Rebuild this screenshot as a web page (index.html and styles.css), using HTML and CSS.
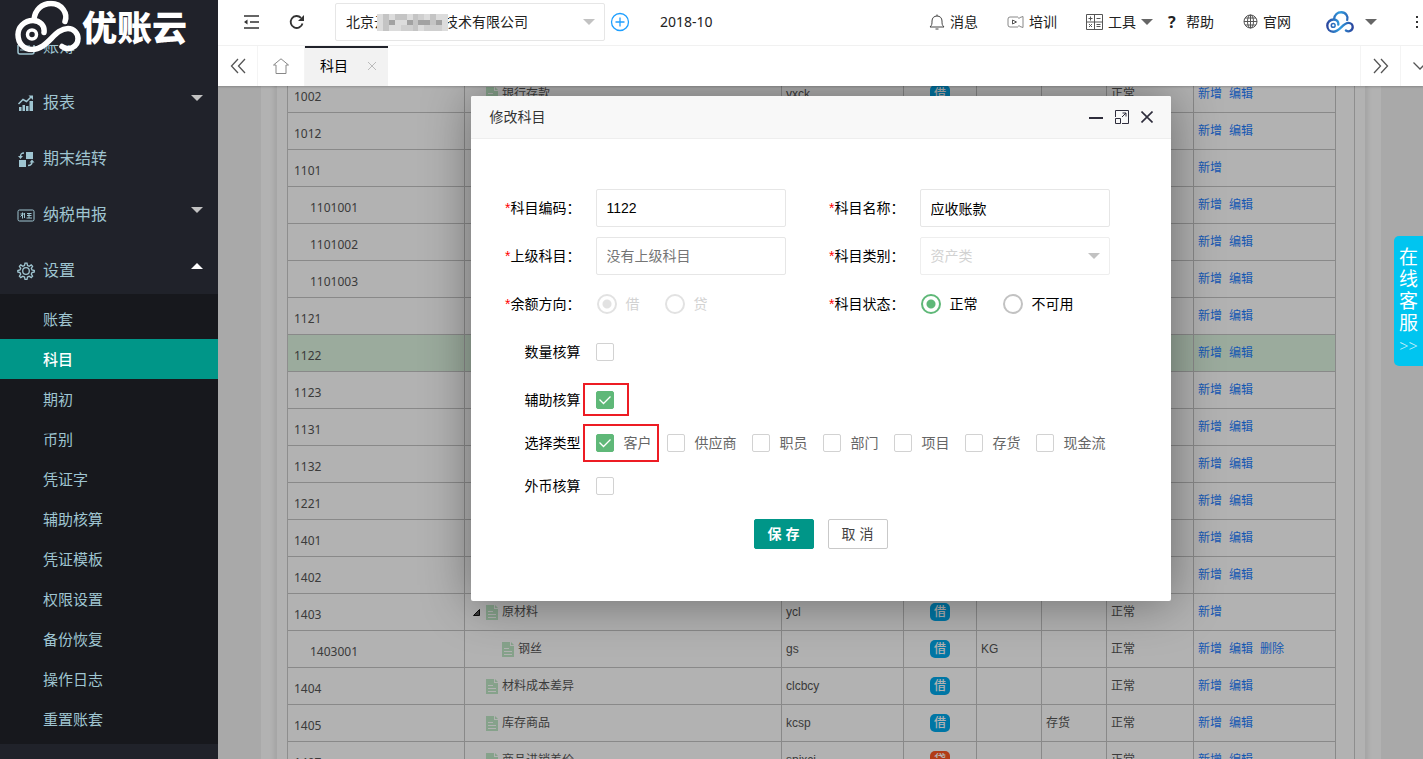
FILE: index.html
```html
<!DOCTYPE html>
<html lang="zh-CN">
<head>
<meta charset="utf-8">
<title>优账云 - 科目</title>
<link rel="stylesheet" href="styles.css">
</head>
<body>
<svg class="defs" aria-hidden="true">
  <symbol id="doc" viewBox="0 0 12 15"><path d="M0 0h8v4h4v11H0z" fill="#c1e9c7"/><path d="M9 0l3 3H9z" fill="#c1e9c7"/><path d="M2 6.500h5M2 9.500h8M2 12.500h8" stroke="#fff"/></symbol>
  <symbol id="cloud" viewBox="0 0 66 52"><g fill="none" stroke-width="5.500" stroke-linecap="round"><path d="M19 19C20 9 27 3 36 3c11 0 17 10 14 18"/><path d="M29 32c1-7-4-12-11-12C9 20 3 27 3 34c0 9 6 15 14 15 16 0 22-21 36-21 6 0 10 5 10 10 0 8-9 13-16 8"/><circle cx="17" cy="34" r="4.500" stroke-width="3.500"/></g></symbol>
  <symbol id="tick" viewBox="0 0 18 18"><path d="M3.500 8.500l4 4 7-7" fill="none" stroke="#fff" stroke-width="1.300"/></symbol>
</svg>
<aside class="sidebar">
  <div class="brand"><svg class="brand-mark" viewBox="0 0 66 52"><use href="#cloud"/></svg><span class="brand-name">优账云</span></div>
  <nav class="menu">
    <a class="menu-item" href="#"><svg class="menu-icon" viewBox="0 0 18 18"><rect x="1" y="3" width="16" height="13" rx="2" fill="none" stroke="currentColor" stroke-width="1.500"/><path d="M3 12h12M5 8h8" stroke="currentColor"/></svg><span class="menu-text">账簿</span></a>
    <a class="menu-item" href="#"><svg class="menu-icon" viewBox="0 0 18 18"><path d="M2 17v-4h2.500v4zM5.500 17v-6H8v6zM9 17v-5h2.500v5zM12.500 17V7H16v10z" fill="currentColor"/><path d="M1.500 10L6 5.500l3.500 2L14 3" fill="none" stroke="currentColor" stroke-width="1.500"/><path d="M11.500 1.500H16V6z" fill="currentColor"/></svg><span class="menu-text">报表</span><i class="caret"></i></a>
    <a class="menu-item" href="#"><svg class="menu-icon" viewBox="0 0 18 18"><path d="M9 2h7v7H9zM2 10h7v7H2z" fill="currentColor"/><path d="M7 3C4 3 3.500 4 3.500 7M11 15.500c3 0 4-1 4-4" fill="none" stroke="currentColor" stroke-width="1.500"/><path d="M1 6h5L3.500 9zM12.500 12.500h5L15 9.500z" fill="currentColor"/></svg><span class="menu-text">期末结转</span></a>
    <a class="menu-item" href="#"><svg class="menu-icon" viewBox="0 0 18 18"><rect x="1" y="4" width="16" height="11" rx="1.500" fill="none" stroke="currentColor"/><path d="M3.500 8h4M5.500 6.500v6M3.500 10.500l2-2M7.500 7v5M10 7.500h4.500M10 9.500h4.500M9.500 12H15M12 7v5" stroke="currentColor"/></svg><span class="menu-text">纳税申报</span><i class="caret"></i></a>
    <a class="menu-item" href="#"><svg class="menu-icon" viewBox="0 0 18 18"><g fill="none" stroke="currentColor" stroke-width="1.300"><circle cx="9" cy="9" r="3.300"/><path d="M7.500 3.500L8 1.200h2l.5 2.300 1.700.7 2-1.300 1.400 1.400-1.300 2 .7 1.700 2.300.5v1.500l-2.300.5-.7 1.700 1.300 2-1.400 1.400-2-1.300-1.700.7-.5 2.300H8l-.5-2.300-1.700-.7-2 1.300-1.400-1.400 1.300-2-.7-1.700L.8 10V8.500L3 8l.7-1.700-1.300-2 1.400-1.400 2 1.300z"/></g></svg><span class="menu-text">设置</span><i class="caret caret-up"></i></a>
    <div class="submenu">
      <a href="#">账套</a><a class="current" href="#">科目</a><a href="#">期初</a><a href="#">币别</a><a href="#">凭证字</a><a href="#">辅助核算</a><a href="#">凭证模板</a><a href="#">权限设置</a><a href="#">备份恢复</a><a href="#">操作日志</a><a href="#">重置账套</a>
    </div>
  </nav>
</aside>
<div class="main">
  <header class="topbar">
    <button class="icon-btn" aria-label="菜单"><svg width="16" height="16" viewBox="0 0 16 16"><path d="M1 2h15M7 8h9M1 14h15" stroke="#333" stroke-width="1.500"/><path d="M1 8l3.500-2.500v5z" fill="#333"/></svg></button>
    <button class="icon-btn" aria-label="刷新"><svg width="16" height="16" viewBox="0 0 16 16"><path d="M13.500 9.500A6 6 0 1 1 12 3.800" fill="none" stroke="#333" stroke-width="1.800"/><path d="M15 1v6H9z" fill="#333"/></svg></button>
    <div class="company">
      <select class="select" aria-label="公司"><option>北京云　　　　技术有限公司</option></select>
      <svg class="mosaic" viewBox="0 0 12 3" preserveAspectRatio="none" shape-rendering="crispEdges"><path fill="#dcdcdc" d="M0 0h12v3H0z"/><path fill="#c4c4c4" d="M1 0h1v3H1zM3 0h2v1H3zM6 0h1v3H6zM9 0h1v2H9z"/><path fill="#a2a2a2" d="M5 1h1v1H5zM7 1h2v1H7zM10 1h1v1h-1zM2 1h1v1H2z"/><path fill="#cfcfcf" d="M4 2h2v1H4zM8 2h3v1H8zM7 0h1v1H7z"/></svg>
      <i class="caret caret-light"></i>
    </div>
    <button class="plus" aria-label="新增"><svg width="20" height="20" viewBox="0 0 20 20"><g fill="none" stroke="#1e9fff" stroke-width="1.300"><circle cx="10" cy="10" r="8.500"/><path d="M10 5.500v9M5.500 10h9"/></g></svg></button>
    <span class="period">2018-10</span>
    <nav class="tools">
      <a href="#"><svg width="16" height="16" viewBox="0 0 16 16"><path d="M1 13h14c-2-2-2-3-2-6 0-3-2-5-5-5S3 4 3 7c0 3 0 4-2 6zM6.500 15h3M8 .5V2" fill="none" stroke="#444"/></svg>消息</a>
      <a class="gap-md" href="#"><svg width="17" height="16" viewBox="0 0 17 16"><path d="M11 13H3a2 2 0 0 1-2-2V5a2 2 0 0 1 2-2h8M13 3.500l3-1v11l-3-1M12 3v2M12 11v2" fill="none" stroke="#888"/><path d="M5.500 6v4l4-2z" fill="none" stroke="#555"/></svg>培训</a>
      <a class="gap-md" href="#"><svg width="17" height="16" viewBox="0 0 17 16"><path d="M.5.500h16v15H.5zM8.500 1v14M1 8h15M2.500 4.500h4M4.500 2.500v4M10.500 4.500h4M3 10l3 3M6 10l-3 3M10.500 10.500h4M10.500 12.500h4" fill="none" stroke="#555"/></svg>工具<i class="caret caret-dark"></i></a>
      <a class="gap-sm" href="#"><b class="question">?</b>帮助</a>
      <a class="gap-md" href="#"><svg width="15" height="15" viewBox="0 0 15 15"><g fill="none" stroke="#555"><circle cx="7.500" cy="7.500" r="6.500"/><ellipse cx="7.500" cy="7.500" rx="3" ry="6.500"/><path d="M7.500 1v13M1 7.500h13M2 4h11M2 11h11"/></g></svg>官网</a>
      <a class="account" href="#" aria-label="账号"><svg class="account-mark" viewBox="0 0 66 52"><defs><linearGradient id="blue" gradientUnits="userSpaceOnUse" x1="0" y1="0" x2="66" y2="0"><stop offset="0" stop-color="#2a3f98"/><stop offset=".5" stop-color="#2f9de0"/><stop offset="1" stop-color="#2a3f98"/></linearGradient></defs><use href="#cloud"/></svg><i class="caret caret-dark"></i></a>
      <button class="more" aria-label="更多"><svg width="4" height="14" viewBox="0 0 4 14"><path d="M1 1h2v2H1zM1 6h2v2H1zM1 11h2v2H1z" fill="#333"/></svg></button>
    </nav>
  </header>
  <div class="tabs">
    <button class="tab-ctl" aria-label="左移"><svg width="16" height="16" viewBox="0 0 16 16"><path d="M8 1L1.500 8 8 15M15 1L8.500 8l6.500 7" fill="none" stroke="#555" stroke-width="1.300"/></svg></button>
    <button class="tab-home" aria-label="主页"><svg width="16" height="16" viewBox="0 0 16 16"><path d="M.5 7L8 .8 15.500 7H13v8.500H3V7z" fill="none" stroke="#888"/></svg></button>
    <div class="tab">科目<button class="tab-close" aria-label="关闭标签"><svg width="8" height="8" viewBox="0 0 8 8"><path d="M0 0l8 8M8 0L0 8" stroke="#bbb"/></svg></button></div>
    <button class="tab-ctl tab-right" aria-label="右移"><svg width="16" height="16" viewBox="0 0 16 16"><path d="M1 1l6.500 7L1 15M8 1l6.500 7L8 15" fill="none" stroke="#555" stroke-width="1.300"/></svg></button>
    <button class="tab-ctl tab-last" aria-label="标签菜单"><svg width="14" height="8" viewBox="0 0 14 8"><path d="M.5.500L7 7l6.500-6.500" fill="none" stroke="#555" stroke-width="1.300"/></svg></button>
  </div>
  <main class="content">
    <section class="page"><div class="card"><div class="table-box">
      <table class="accounts">
        <colgroup><col class="c-code"><col><col class="c-py"><col class="c-dir"><col class="c-unit"><col class="c-unit"><col class="c-state"><col class="c-op"></colgroup>
        <tbody>
        <tr><td class="code">1002</td><td><span class="name"><svg class="doc"><use href="#doc"/></svg>银行存款</span></td><td>yxck</td><td class="dir"><span class="badge">借</span></td><td></td><td></td><td>正常</td><td><span class="ops"><a href="#">新增</a><a href="#">编辑</a></span></td></tr>
        <tr><td class="code">1012</td><td></td><td></td><td></td><td></td><td></td><td></td><td><span class="ops"><a href="#">新增</a><a href="#">编辑</a></span></td></tr>
        <tr><td class="code">1101</td><td></td><td></td><td></td><td></td><td></td><td></td><td><span class="ops"><a href="#">新增</a></span></td></tr>
        <tr><td class="code child">1101001</td><td></td><td></td><td></td><td></td><td></td><td></td><td><span class="ops"><a href="#">新增</a><a href="#">编辑</a></span></td></tr>
        <tr><td class="code child">1101002</td><td></td><td></td><td></td><td></td><td></td><td></td><td><span class="ops"><a href="#">新增</a><a href="#">编辑</a></span></td></tr>
        <tr><td class="code child">1101003</td><td></td><td></td><td></td><td></td><td></td><td></td><td><span class="ops"><a href="#">新增</a><a href="#">编辑</a></span></td></tr>
        <tr><td class="code">1121</td><td></td><td></td><td></td><td></td><td></td><td></td><td><span class="ops"><a href="#">新增</a><a href="#">编辑</a></span></td></tr>
        <tr class="selected"><td class="code">1122</td><td></td><td></td><td></td><td></td><td></td><td></td><td><span class="ops"><a href="#">新增</a><a href="#">编辑</a></span></td></tr>
        <tr><td class="code">1123</td><td></td><td></td><td></td><td></td><td></td><td></td><td><span class="ops"><a href="#">新增</a><a href="#">编辑</a></span></td></tr>
        <tr><td class="code">1131</td><td></td><td></td><td></td><td></td><td></td><td></td><td><span class="ops"><a href="#">新增</a><a href="#">编辑</a></span></td></tr>
        <tr><td class="code">1132</td><td></td><td></td><td></td><td></td><td></td><td></td><td><span class="ops"><a href="#">新增</a><a href="#">编辑</a></span></td></tr>
        <tr><td class="code">1221</td><td></td><td></td><td></td><td></td><td></td><td></td><td><span class="ops"><a href="#">新增</a><a href="#">编辑</a></span></td></tr>
        <tr><td class="code">1401</td><td></td><td></td><td></td><td></td><td></td><td></td><td><span class="ops"><a href="#">新增</a><a href="#">编辑</a></span></td></tr>
        <tr><td class="code">1402</td><td></td><td></td><td></td><td></td><td></td><td></td><td><span class="ops"><a href="#">新增</a><a href="#">编辑</a></span></td></tr>
        <tr><td class="code">1403</td><td><span class="name parent"><svg class="fold" viewBox="0 0 7 7"><path d="M6.500.500v6h-6z" fill="#555" stroke="#111"/></svg><svg class="doc"><use href="#doc"/></svg>原材料</span></td><td>ycl</td><td class="dir"><span class="badge">借</span></td><td></td><td></td><td>正常</td><td><span class="ops"><a href="#">新增</a></span></td></tr>
        <tr><td class="code child">1403001</td><td><span class="name nested"><svg class="doc"><use href="#doc"/></svg>钢丝</span></td><td>gs</td><td class="dir"><span class="badge">借</span></td><td>KG</td><td></td><td>正常</td><td><span class="ops"><a href="#">新增</a><a href="#">编辑</a><a href="#">删除</a></span></td></tr>
        <tr><td class="code">1404</td><td><span class="name"><svg class="doc"><use href="#doc"/></svg>材料成本差异</span></td><td>clcbcy</td><td class="dir"><span class="badge">借</span></td><td></td><td></td><td>正常</td><td><span class="ops"><a href="#">新增</a><a href="#">编辑</a></span></td></tr>
        <tr><td class="code">1405</td><td><span class="name"><svg class="doc"><use href="#doc"/></svg>库存商品</span></td><td>kcsp</td><td class="dir"><span class="badge">借</span></td><td></td><td>存货</td><td>正常</td><td><span class="ops"><a href="#">新增</a><a href="#">编辑</a></span></td></tr>
        <tr><td class="code">1407</td><td><span class="name"><svg class="doc"><use href="#doc"/></svg>商品进销差价</span></td><td>spjxcj</td><td class="dir"><span class="badge badge-credit">贷</span></td><td></td><td></td><td>正常</td><td><span class="ops"><a href="#">新增</a><a href="#">编辑</a></span></td></tr>
        </tbody>
      </table>
    </div></div></section>
    <div class="overlay">
      <div class="dialog" role="dialog" aria-labelledby="dlg-title">
        <div class="dialog-head"><span id="dlg-title">修改科目</span>
          <div class="dialog-ctl">
            <button aria-label="最小化"><svg width="14" height="14" viewBox="0 0 14 14"><path d="M0 8h14" stroke="#2e2d3c" stroke-width="2"/></svg></button>
            <button aria-label="最大化"><svg width="14" height="14" viewBox="0 0 14 14"><path d="M.5 7V.5h13v13H7M.5 8.500h5v5h-5zM7 7l4-4M7.500 3H11v3.500" fill="none" stroke="#2e2d3c"/></svg></button>
            <button aria-label="关闭"><svg width="12" height="12" viewBox="0 0 12 12"><path d="M.5.500l11 11M11.500.500l-11 11" stroke="#2e2d3c" stroke-width="1.600"/></svg></button>
          </div>
        </div>
        <form class="form">
          <div class="row">
            <div class="field"><label class="label" for="code"><i>*</i>科目编码：</label><input class="input" id="code" type="text" value="1122"></div>
            <div class="field"><label class="label" for="name"><i>*</i>科目名称：</label><input class="input" id="name" type="text" value="应收账款"></div>
          </div>
          <div class="row">
            <div class="field"><label class="label" for="parent"><i>*</i>上级科目：</label><input class="input" id="parent" type="text" placeholder="没有上级科目"></div>
            <div class="field"><label class="label" for="kind"><i>*</i>科目类别：</label><div class="select-wrap"><select class="select" id="kind" disabled><option>资产类</option></select><i class="caret caret-light"></i></div></div>
          </div>
          <div class="row">
            <div class="field"><span class="label"><i>*</i>余额方向：</span><div class="radios"><label class="radio off"><input type="radio" name="side" checked disabled>借</label><label class="radio off"><input type="radio" name="side" disabled>贷</label></div></div>
            <div class="field"><span class="label"><i>*</i>科目状态：</span><div class="radios"><label class="radio"><input type="radio" name="state" checked>正常</label><label class="radio"><input type="radio" name="state">不可用</label></div></div>
          </div>
          <div class="row"><div class="field"><label class="label" for="qty">数量核算</label><span class="box"><input type="checkbox" id="qty"><svg><use href="#tick"/></svg></span></div></div>
          <div class="row"><div class="field"><label class="label" for="aux">辅助核算</label><span class="check marked marked-box"><span class="box"><input type="checkbox" id="aux" checked><svg><use href="#tick"/></svg></span></span></div></div>
          <div class="row row-short"><div class="field"><span class="label">选择类型</span><div class="checks">
            <label class="check marked"><span class="box"><input type="checkbox" checked><svg><use href="#tick"/></svg></span>客户</label>
            <label class="check"><span class="box"><input type="checkbox"><svg><use href="#tick"/></svg></span>供应商</label>
            <label class="check"><span class="box"><input type="checkbox"><svg><use href="#tick"/></svg></span>职员</label>
            <label class="check"><span class="box"><input type="checkbox"><svg><use href="#tick"/></svg></span>部门</label>
            <label class="check"><span class="box"><input type="checkbox"><svg><use href="#tick"/></svg></span>项目</label>
            <label class="check"><span class="box"><input type="checkbox"><svg><use href="#tick"/></svg></span>存货</label>
            <label class="check"><span class="box"><input type="checkbox"><svg><use href="#tick"/></svg></span>现金流</label>
          </div></div></div>
          <div class="row"><div class="field"><label class="label" for="fx">外币核算</label><span class="box"><input type="checkbox" id="fx"><svg><use href="#tick"/></svg></span></div></div>
          <div class="actions"><button type="button" class="btn btn-primary">保 存</button><button type="button" class="btn">取 消</button></div>
        </form>
      </div>
    </div>
  </main>
  <a class="service" href="#"><span>在</span><span>线</span><span>客</span><span>服</span><span class="service-more">&gt;&gt;</span></a>
</div>
</body>
</html>
```
FILE: styles.css
```css
* { box-sizing: border-box; }
html, body { height: 100%; }
body {
  margin: 0;
  display: flex;
  overflow: hidden;
  font: 14px/20px "Liberation Sans", "Noto Sans CJK SC", sans-serif;
  color: #333;
  background: #f2f2f2;
}
a { color: inherit; text-decoration: none; }
button { padding: 0; border: 0; background: none; font: inherit; color: inherit; }
svg { flex: none; }
button svg { display: block; }
i { font-style: normal; }
.defs { position: absolute; width: 0; height: 0; }

.caret { width: 0; height: 0; border: 6px solid transparent; border-top-color: #c2c2c2; border-bottom: 0; }
.caret-up { border-bottom: 6px solid #fff; border-top: 0; }
.caret-light { position: absolute; right: 10px; top: 16px; pointer-events: none; }
.caret-dark { border-top-color: #666; }

/* sidebar */
.sidebar { position: relative; flex: none; width: 218px; overflow: hidden; background: #20222a; }
.brand {
  position: absolute; z-index: 2; top: 0; left: 0; right: 0; height: 45px;
  display: flex; gap: 1px; padding-left: 15px;
  background: #20222a; color: #fff;
}
.brand-mark { width: 66px; height: 53px; stroke: #fff; }
.brand-name { font-size: 35px; font-weight: 900; line-height: 58px; }
.menu { padding-top: 14px; color: #9fc5d1; }
.menu-item { display: flex; align-items: center; height: 56px; padding: 0 15px 0 17px; }
.menu-icon { width: 18px; height: 18px; margin: 10px 8px 0 0; }
.menu-text { flex: 1; padding-top: 10px; font-size: 16px; line-height: 48px; }
.submenu { padding: 5px 0; background: #17181d; }
.submenu a { display: block; height: 40px; padding-left: 43px; font-size: 15px; line-height: 42px; }
.submenu .current { background: #009688; color: #fff; font-weight: 500; }

/* top bar */
.main { position: relative; flex: 1; min-width: 0; display: flex; flex-direction: column; }
.topbar { flex: none; display: flex; align-items: center; height: 46px; padding: 0 0 2px 25px; background: #fff; border-bottom: 1px solid #f4f4f4; }
.icon-btn { width: 16px; margin-right: 30px; }
.company { position: relative; width: 270px; margin-right: 5px; }
.select {
  display: block; width: 100%; height: 38px; padding: 0 10px; appearance: none;
  border: 1px solid #e6e6e6; border-radius: 2px; background: #fff; color: #222; font: inherit; opacity: 1;
}
.select:disabled { border-color: #eee; color: #d2d2d2; }
.mosaic { position: absolute; left: 42px; top: 11px; width: 71px; height: 17px; }
.period { margin-left: 30px; font: 14px/20px "Noto Sans", sans-serif; color: #222; }
.tools { flex: 1; display: flex; align-items: center; justify-content: flex-end; color: #222; }
.tools a { display: flex; align-items: center; gap: 5px; }
.gap-md { margin-left: 29px; }
.gap-sm { margin-left: 15px; }
.question { width: 13px; font: 700 16px/20px "Noto Sans", sans-serif; }
.tools .account { margin-left: 35px; gap: 11px; }
.account-mark { width: 28px; height: 22px; stroke: url(#blue); }
.more { margin: 0 4px 0 38px; }

/* tabs */
.tabs { position: relative; z-index: 1; flex: none; display: flex; height: 40px; background: #fff; box-shadow: 0 1px 2px rgba(0, 0, 0, .2); }
.tab-ctl { flex: none; display: flex; align-items: center; justify-content: center; width: 40px; border-right: 1px solid #f4f4f4; }
.tab-home { display: flex; align-items: center; justify-content: center; width: 47px; border-right: 1px solid #f4f4f4; }
.tab { display: flex; align-items: center; gap: 20px; padding: 0 12px 2px 15px; border-top: 2px solid #20222a; background: #f2f2f2; color: #000; }
.tab-right { margin-left: auto; width: 41px; border-left: 1px solid #f4f4f4; }
.tab-last { width: 22px; padding-left: 12px; justify-content: flex-start; overflow: hidden; border: 0; }

/* accounts table */
.content { position: relative; flex: 1; min-height: 0; overflow: hidden; }
.page { margin: -10px 42px 0 43px; padding: 0 15px; background: #fff; }
.card { padding: 0 10px; border: 1px solid #eee; border-width: 0 1px; box-shadow: 0 0 6px rgba(0, 0, 0, .15); }
.table-box { padding-right: 18px; border: 1px solid #ccc; border-width: 0 1px; }
.accounts { width: 100%; table-layout: fixed; border-collapse: separate; border-spacing: 0; font-size: 12px; line-height: 18px; color: #555; }
.accounts td { height: 37px; padding: 0 4px; border: 1px solid #c4c4c4; border-width: 0 1px 1px 0; white-space: nowrap; }
.accounts .code { padding: 5px 6px 0; font-family: "Noto Sans", sans-serif; }
.accounts .child { padding-left: 22px; }
.accounts .dir { text-align: center; }
.c-code { width: 177px; }
.c-py { width: 122px; }
.c-dir { width: 73px; }
.c-unit { width: 65px; }
.c-state { width: 87px; }
.c-op { width: 142px; }
.selected { background: #dff5e1; }
.name { display: flex; align-items: center; gap: 4px; padding-left: 17px; }
.parent { padding-left: 4px; }
.nested { padding-left: 33px; }
.fold { width: 7px; height: 7px; margin-right: 2px; }
.doc { width: 12px; height: 15px; }
.badge { display: inline-block; width: 20px; border-radius: 5px; background: #01aaed; color: #fff; font-weight: 500; }
.badge-credit { background: #ff5722; }
.ops { display: flex; gap: 7px; color: #1e80ff; }

/* dialog */
.overlay { position: absolute; inset: 0; display: flex; justify-content: center; align-items: flex-start; padding-top: 10px; background: rgba(0, 0, 0, .3); }
.dialog { width: 700px; border-radius: 2px; background: #fff; box-shadow: 1px 1px 50px rgba(0, 0, 0, .4); }
.dialog-head { display: flex; align-items: center; justify-content: space-between; height: 43px; padding: 0 18px 0 19px; border-bottom: 1px solid #eee; border-radius: 2px 2px 0 0; background: #f8f8f8; }
.dialog-ctl { display: flex; align-items: center; gap: 12px; }
.form { display: flex; flex-direction: column; gap: 10px; padding: 50px 0 52px; color: #000; }
.row { display: flex; gap: 9px; height: 38px; }
.row-short { height: 28px; }
.field { display: flex; align-items: center; gap: 15px; min-width: 315px; }
.label { width: 110px; text-align: right; white-space: nowrap; }
.label i { color: #f00; }
.input { width: 190px; height: 38px; padding: 0 10px; border: 1px solid #e6e6e6; border-radius: 2px; background: #fff; color: #000; font: inherit; }
.input::placeholder { color: #757575; }
.select-wrap { position: relative; width: 190px; }
.radios { display: flex; gap: 25px; padding-left: 1px; }
.radio { display: flex; align-items: center; gap: 9px; }
.radio input { appearance: none; width: 20px; height: 20px; margin: 0; border: 2px solid #c2c2c2; border-radius: 50%; }
.radio input:checked { border-color: #5fb878; background: radial-gradient(circle, #5fb878 4px, transparent 5px); }
.radio.off { color: #d2d2d2; }
.radio.off input { border-color: #e2e2e2; }
.radio.off input:checked { background: radial-gradient(circle, #e2e2e2 4px, transparent 5px); }
.checks { display: flex; gap: 15px; }
.check { position: relative; display: flex; align-items: center; gap: 10px; color: #666; }
.box { display: grid; width: 18px; height: 18px; }
.box input, .box svg { grid-area: 1 / 1; width: 18px; height: 18px; margin: 0; }
.box input { appearance: none; border: 1px solid #d2d2d2; border-radius: 2px; background: #fff; }
.box input:checked { border-color: #5fb878; background: #5fb878; }
.box svg { visibility: hidden; pointer-events: none; }
.box input:checked + svg { visibility: visible; }
.marked::after { content: ""; position: absolute; inset: -9px -7px -9px -13px; border: 2px solid #ed1c24; }
.marked-box::after { inset: -8px -15px -7px -13px; }
.actions { display: flex; justify-content: center; gap: 14px; padding-top: 4px; }
.btn { width: 60px; height: 30px; border: 1px solid #c9c9c9; border-radius: 2px; background: #fff; color: #444; }
.btn-primary { border-color: #009688; background: #009688; color: #fff; font-weight: 700; }

/* floating service tab */
.service {
  position: absolute; z-index: 3; right: 0; top: 236px; width: 29px; padding: 11px 0 8px;
  display: flex; flex-direction: column; align-items: center;
  border-radius: 5px 0 0 5px; background: #00c5f0; color: #fff; font-size: 19px; line-height: 22px;
}
.service-more { font: 300 16px/23px "Open Sans", sans-serif; opacity: .8; }
```
